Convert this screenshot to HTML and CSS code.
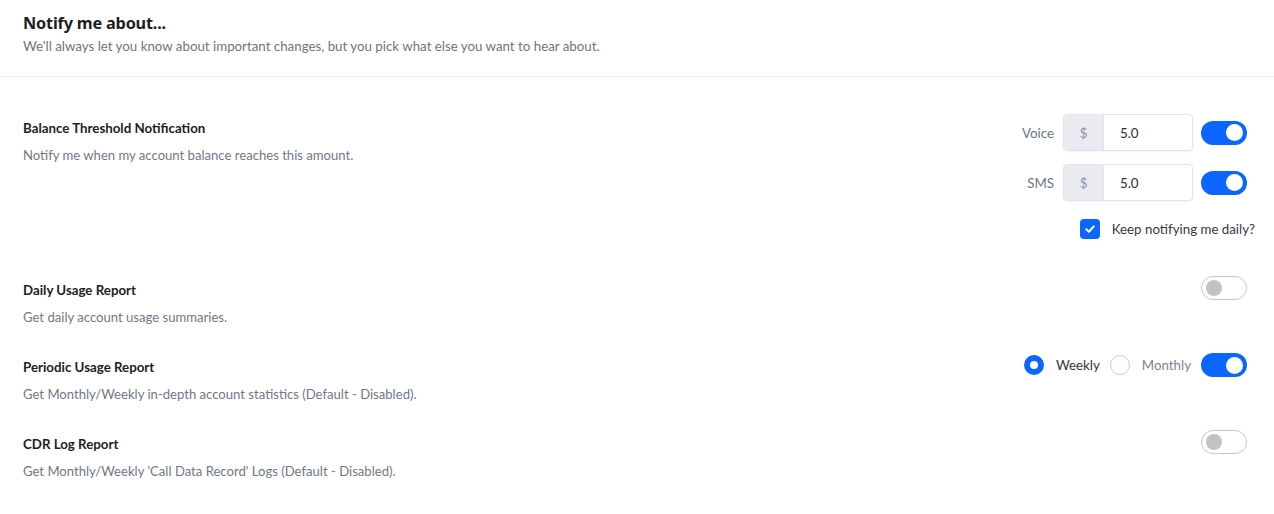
FILE: index.html
```html
<!DOCTYPE html>
<html>
<head>
<meta charset="utf-8">
<link rel="stylesheet" href="styles.css">
</head>
<body>
<div class="page">
  <header class="head">
    <h1 class="title">Notify me about...</h1>
    <p class="subtitle">We'll always let you know about important changes, but you pick what else you want to hear about.</p>
  </header>
  <main class="rows">
    <section class="row row-balance">
      <div class="info">
        <h2 class="row-title">Balance Threshold Notification</h2>
        <p class="row-desc">Notify me when my account balance reaches this amount.</p>
      </div>
      <div class="controls-col">
        <div class="ctl-line">
          <span class="ctl-label">Voice</span>
          <div class="input-group"><span class="addon">$</span><span class="value">5.0</span></div>
          <span class="toggle on"><span class="knob"></span></span>
        </div>
        <div class="ctl-line">
          <span class="ctl-label">SMS</span>
          <div class="input-group"><span class="addon">$</span><span class="value">5.0</span></div>
          <span class="toggle on"><span class="knob"></span></span>
        </div>
        <div class="check-line">
          <span class="checkbox"><svg width="12" height="12" viewBox="0 0 12 12"><path d="M2.3 6.2 L4.9 8.7 L9.8 3.4" fill="none" stroke="#fff" stroke-width="2" stroke-linecap="round" stroke-linejoin="round"/></svg></span>
          <span class="check-text">Keep notifying me daily?</span>
        </div>
      </div>
    </section>
    <section class="row">
      <div class="info">
        <h2 class="row-title">Daily Usage Report</h2>
        <p class="row-desc">Get daily account usage summaries.</p>
      </div>
      <div class="controls">
        <span class="toggle off"><span class="knob"></span></span>
      </div>
    </section>
    <section class="row">
      <div class="info">
        <h2 class="row-title">Periodic Usage Report</h2>
        <p class="row-desc">Get Monthly/Weekly in-depth account statistics (Default - Disabled).</p>
      </div>
      <div class="controls">
        <span class="radio checked"></span><span class="radio-text dark">Weekly</span>
        <span class="radio"></span><span class="radio-text">Monthly</span>
        <span class="toggle on"><span class="knob"></span></span>
      </div>
    </section>
    <section class="row">
      <div class="info">
        <h2 class="row-title">CDR Log Report</h2>
        <p class="row-desc">Get Monthly/Weekly 'Call Data Record' Logs (Default - Disabled).</p>
      </div>
      <div class="controls">
        <span class="toggle off"><span class="knob"></span></span>
      </div>
    </section>
  </main>
</div>
</body>
</html>
```
FILE: styles.css
```css
* { box-sizing: border-box; }
html, body { margin: 0; padding: 0; background: #fff; }
body {
  font-family: "Lato", "Open Sans", sans-serif;
  font-size: 13.3px;
  color: #212529;
}
.head {
  padding: 12px 23px 20px;
  border-bottom: 1px solid #e9ebee;
}
.title {
  margin: 0;
  font-family: "Noto Sans", "Lato", sans-serif;
  font-weight: 700;
  font-size: 16.3px;
  line-height: 22px;
  color: #1c1e24;
  letter-spacing: -0.2px;
}
.subtitle {
  margin: 2px 0 0;
  font-size: 13.3px;
  line-height: 20px;
  color: #6c7585;
}
.rows {
  display: flex;
  flex-direction: column;
  gap: 26px;
  padding: 37px 27px 0 23px;
}
.row {
  display: flex;
  justify-content: space-between;
  align-items: flex-start;
}
.row-balance { padding-bottom: 9px; }
.info { padding-top: 4px; }
.row-title {
  margin: 0;
  font-size: 13.3px;
  font-weight: 700;
  line-height: 20px;
  color: #1e2126;
}
.row-desc {
  margin: 7px 0 0;
  font-size: 13.1px;
  line-height: 20px;
  color: #6f7889;
}
.controls-col {
  display: flex;
  flex-direction: column;
  align-items: flex-end;
  gap: 13px;
}
.ctl-line, .controls {
  display: flex;
  align-items: center;
}
.ctl-line { height: 37px; }
.controls { height: 24px; }
.ctl-label {
  color: #6c7585;
  margin-right: 9px;
}
.input-group {
  display: flex;
  width: 130px;
  height: 37px;
  border: 1px solid #e1e4e8;
  border-radius: 4px;
  overflow: hidden;
  box-shadow: 0 1px 2px rgba(0,0,0,0.05);
  margin-right: 8px;
}
.addon {
  width: 40px;
  flex: none;
  background: #e9ebf0;
  border-right: 1px solid #e1e4e8;
  color: #8a93a3;
  display: flex;
  align-items: center;
  justify-content: center;
}
.value {
  display: flex;
  align-items: center;
  padding-left: 16px;
  color: #2a2e35;
}
.toggle {
  width: 46px;
  height: 24px;
  border-radius: 12px;
  display: flex;
  align-items: center;
  flex: none;
}
.toggle.on {
  background: #0a66ff;
  justify-content: flex-end;
  padding-right: 4px;
}
.toggle.on .knob {
  width: 17px;
  height: 17px;
  border-radius: 50%;
  background: #fff;
}
.toggle.off {
  background: #fff;
  border: 1px solid #c8c8c8;
  padding-left: 4px;
}
.toggle.off .knob {
  width: 16px;
  height: 16px;
  border-radius: 50%;
  background: #c2c2c2;
}
.check-line {
  display: flex;
  align-items: center;
  height: 24px;
  margin-top: 3px;
  margin-right: -8px;
}
.checkbox {
  width: 20px;
  height: 20px;
  border-radius: 4px;
  background: #0a66ff;
  display: flex;
  align-items: center;
  justify-content: center;
  margin-right: 12px;
}
.check-text { color: #333a45; }
.radio {
  width: 20px;
  height: 20px;
  border-radius: 50%;
  border: 1px solid #c9c9c9;
  background: #fff;
  flex: none;
}
.radio.checked {
  border: 6px solid #0a66ff;
}
.radio-text {
  margin: 0 10px 0 12px;
  color: #7b8495;
}
.radio-text.dark { color: #2f3540; }
```
